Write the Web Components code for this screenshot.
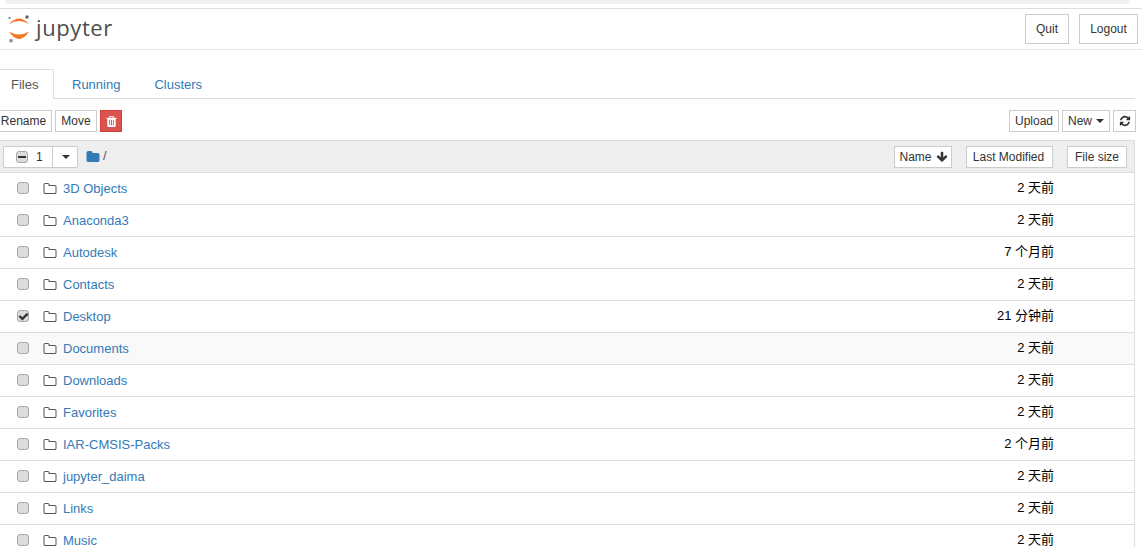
<!DOCTYPE html>
<html>
<head>
<meta charset="utf-8">
<title>Jupyter</title>
<style>
html, body { margin: 0; height: 547px; overflow: hidden; background: #fff; }
body { font: 13px/18px "Liberation Sans", "Noto Sans CJK SC", sans-serif; color: #000; }
</style>
</head>
<body>
<jp-header></jp-header>
<jp-tabs></jp-tabs>
<jp-toolbar></jp-toolbar>
<jp-list>
  <jp-row>3D Objects<span slot="time">2 天前</span></jp-row>
  <jp-row>Anaconda3<span slot="time">2 天前</span></jp-row>
  <jp-row>Autodesk<span slot="time">7 个月前</span></jp-row>
  <jp-row>Contacts<span slot="time">2 天前</span></jp-row>
  <jp-row checked>Desktop<span slot="time">21 分钟前</span></jp-row>
  <jp-row hover>Documents<span slot="time">2 天前</span></jp-row>
  <jp-row>Downloads<span slot="time">2 天前</span></jp-row>
  <jp-row>Favorites<span slot="time">2 天前</span></jp-row>
  <jp-row>IAR-CMSIS-Packs<span slot="time">2 个月前</span></jp-row>
  <jp-row>jupyter_daima<span slot="time">2 天前</span></jp-row>
  <jp-row>Links<span slot="time">2 天前</span></jp-row>
  <jp-row>Music<span slot="time">2 天前</span></jp-row>
</jp-list>

<script>
// iconos dibujados a mano, viewBox 1792
const ICONS = {
  folderO: "M1600 1312v-704q0-40-28-68t-68-28h-704q-40 0-68-28t-28-68v-64q0-40-28-68t-68-28h-320q-40 0-68 28t-28 68v960q0 40 28 68t68 28h1216q40 0 68-28t28-68zm128-704v704q0 92-66 158t-158 66h-1216q-92 0-158-66t-66-158v-960q0-92 66-158t158-66h320q92 0 158 66t66 158v32h672q92 0 158 66t66 158z",
  folder: "M1728 608v704q0 92-66 158t-158 66h-1216q-92 0-158-66t-66-158v-960q0-92 66-158t158-66h320q92 0 158 66t66 158v32h672q92 0 158 66t66 158z",
  refresh: "M1639 1056q0 5-1 7-64 268-268 434.500t-478 166.500q-146 0-282.500-55t-243.500-157l-129 129q-19 19-45 19t-45-19-19-45v-448q0-26 19-45t45-19h448q26 0 45 19t19 45-19 45l-137 137q71 66 161 102t187 36q134 0 250-65t186-179q11-17 53-117 8-23 30-23h192q13 0 22.500 9.500t9.500 22.500zm25-800v448q0 26-19 45t-45 19h-448q-26 0-45-19t-19-45 19-45l138-138q-148-137-349-137-134 0-250 65t-186 179q-11 17-53 117-8 23-30 23h-199q-13 0-22.500-9.500t-9.500-22.500v-7q65-268 270-434.500t480-166.500q146 0 284 55.500t245 156.500l130-129q19-19 45-19t45 19 19 45z",
  arrowDown: "M1675 832q0 53-37 90l-651 652q-39 37-91 37-53 0-90-37l-651-652q-38-36-38-90 0-53 38-91l74-75q39-37 91-37 53 0 90 37l294 294v-704q0-52 38-90t90-38h128q52 0 90 38t38 90v704l294-294q37-37 90-37 52 0 91 37l75 75q37 39 37 91z",
  trash: "M704 1376v-704q0-14-9-23t-23-9h-64q-14 0-23 9t-9 23v704q0 14 9 23t23 9h64q14 0 23-9t9-23zm256 0v-704q0-14-9-23t-23-9h-64q-14 0-23 9t-9 23v704q0 14 9 23t23 9h64q14 0 23-9t9-23zm256 0v-704q0-14-9-23t-23-9h-64q-14 0-23 9t-9 23v704q0 14 9 23t23 9h64q14 0 23-9t9-23zm-544-992h448l-48-117q-7-9-17-11h-317q-10 2-17 11zm928 32v64q0 14-9 23t-23 9h-96v948q0 83-47 143.500t-113 60.500h-832q-66 0-113-58.500t-47-141.500v-952h-96q-14 0-23-9t-9-23v-64q0-14 9-23t23-9h309l70-167q15-37 54-63t79-26h320q40 0 79 26t54 63l70 167h309q14 0 23 9t9 23z",
  check: "M1671 566q0 40-28 68l-724 724-136 136q-28 28-68 28t-68-28l-136-136-362-362q-28-28-28-68t28-68l136-136q28-28 68-28t68 28l294 295 656-657q28-28 68-28t68 28l136 136q28 28 28 68z"
};

class JpIcon extends HTMLElement {
  connectedCallback() {
    const size = this.getAttribute("size") || 14;
    const shadow = this.attachShadow({ mode: "open" });
    shadow.innerHTML = `
      <style>
      :host { display: inline-flex; flex: none; }
      svg { display: block; fill: currentColor; }
      </style>
      <svg width="${size}" height="${size}" viewBox="0 0 1792 1792"><path d="${ICONS[this.getAttribute("name")]}"/></svg>`;
  }
}
customElements.define("jp-icon", JpIcon);

class JpBtn extends HTMLElement {
  constructor() {
    super();
    this.attachShadow({ mode: "open" }).innerHTML = `
      <style>
      :host {
        display: inline-flex; align-items: center; justify-content: center; gap: 4px;
        box-sizing: border-box; height: 22px; padding: 0 5px;
        border: 1px solid #ccc; background: #fff; color: #333;
        font-size: 12px; line-height: 18px; white-space: nowrap;
      }
      :host([big]) { height: 30px; }
      :host([danger]) { background: #d9534f; border-color: #d43f3a; color: #fff; }
      </style>
      <slot></slot>`;
  }
}
customElements.define("jp-btn", JpBtn);

class JpCheck extends HTMLElement {
  constructor() {
    super();
    this.attachShadow({ mode: "open" }).innerHTML = `
      <style>
      :host {
        display: flex; align-items: center; justify-content: center; flex: none;
        box-sizing: border-box; width: 12px; height: 12px;
        border: 1px solid #a8a8a8; border-radius: 3px; background: #dcdcdc; color: #333;
      }
      i { display: none; width: 8px; height: 2px; background: #333; }
      jp-icon { display: none; }
      :host([checked]) jp-icon { display: inline-flex; }
      :host([mixed]) i { display: block; }
      </style>
      <i></i><jp-icon name="check" size="11"></jp-icon>`;
  }
}
customElements.define("jp-check", JpCheck);

class JpHeader extends HTMLElement {
  constructor() {
    super();
    this.attachShadow({ mode: "open" }).innerHTML = `
      <style>
      :host { display: block; }
      .strip { height: 4px; margin: 0 12px 0 5px; background: #f1f1f1; border-radius: 0 0 8px 8px; }
      .bar {
        display: flex; align-items: center; box-sizing: border-box; height: 42px;
        margin-top: 4px; padding: 0 4px 0 8px;
        border-top: 1px solid #ddd; border-bottom: 1px solid #e7e7e7;
      }
      .logo { display: flex; align-items: center; gap: 5px; flex: 1; }
      .word { font: 22px/30px "Open Sans", sans-serif; color: #4e4e4e; letter-spacing: .6px; margin-top: -4px; }
      .quit { margin-right: 10px; }
      </style>
      <div class="strip"></div>
      <div class="bar">
        <div class="logo">
          <svg width="23" height="30" viewBox="0 0 23 30">
            <path d="M1 10Q11 -1 21 10Q11 4 1 10Z" fill="#f37726"/>
            <path d="M1 17.500Q11 32.500 21 17.500Q11 23.500 1 17.500Z" fill="#f37726"/>
            <circle cx="19" cy="3" r="1.700" fill="#616161"/>
            <circle cx="1.500" cy="4" r="1.100" fill="#767677"/>
            <circle cx="3" cy="26.700" r="1.900" fill="#989798"/>
          </svg>
          <span class="word">jupyter</span>
        </div>
        <jp-btn big class="quit" style="width:44px">Quit</jp-btn>
        <jp-btn big style="width:59px">Logout</jp-btn>
      </div>`;
  }
}
customElements.define("jp-header", JpHeader);

class JpTabs extends HTMLElement {
  constructor() {
    super();
    this.attachShadow({ mode: "open" }).innerHTML = `
      <style>
      :host {
        display: flex; box-sizing: border-box; height: 30px; margin: 19px 7px 0 0;
        border-bottom: 1px solid #ddd; color: #337ab7;
      }
      a { box-sizing: border-box; height: 30px; padding: 7px 17px 0; line-height: 18px; }
      a.on {
        width: 54px; margin-right: 1px; padding: 6px 0 0 11px; color: #555; background: #fff;
        border: 1px solid #ddd; border-left: 0; border-bottom-color: #fff; border-radius: 0 2px 0 0;
      }
      </style>
      <a class="on">Files</a><a>Running</a><a>Clusters</a>`;
  }
}
customElements.define("jp-tabs", JpTabs);

class JpToolbar extends HTMLElement {
  constructor() {
    super();
    this.attachShadow({ mode: "open" }).innerHTML = `
      <style>
      :host { display: flex; gap: 3px; height: 22px; margin: 11px 6px 8px -5px; }
      .space { flex: 1; }
      .trash { width: 22px; padding: 0; }
      </style>
      <jp-btn style="width:57px">Rename</jp-btn>
      <jp-btn style="width:42px">Move</jp-btn>
      <jp-btn danger class="trash"><jp-icon name="trash" size="13"></jp-icon></jp-btn>
      <span class="space"></span>
      <jp-btn style="width:50px">Upload</jp-btn>
      <jp-btn style="width:48px">New <span style="width:0;height:0;border:4px solid transparent;border-top-color:#333;border-bottom:0"></span></jp-btn>
      <jp-btn style="width:23px;padding:0"><jp-icon name="refresh" size="12"></jp-icon></jp-btn>`;
  }
}
customElements.define("jp-toolbar", JpToolbar);

class JpList extends HTMLElement {
  constructor() {
    super();
    this.attachShadow({ mode: "open" }).innerHTML = `
      <style>
      :host { display: block; margin-right: 7px; border-right: 1px solid #ddd; }
      .head {
        display: flex; align-items: center; box-sizing: border-box; height: 33px;
        padding: 0 7px 0 3px; background: #eee;
        border: solid #ddd; border-width: 1px 0;
      }
      .group { display: flex; width: 75px; height: 22px; box-sizing: border-box; border: 1px solid #ccc; border-radius: 2px; background: #fff; color: #333; font-size: 12px; }
      .group .a { display: flex; align-items: center; gap: 8px; width: 49px; box-sizing: border-box; padding-left: 12px; border-right: 1px solid #ccc; }
      .group .b { flex: 1; display: flex; align-items: center; justify-content: center; padding-left: 1px; }
      .caret { width: 0; height: 0; border: 4px solid transparent; border-top-color: #333; border-bottom: 0; }
      .path { display: flex; align-items: center; gap: 3px; margin-left: 8px; flex: 1; color: #337ab7; font-size: 13px; }
      .path span { color: #555; margin-top: -2px; }
      .mid { margin: 0 14px; }
      </style>
      <div class="head">
        <div class="group">
          <div class="a"><jp-check mixed></jp-check>1</div>
          <div class="b"><i class="caret"></i></div>
        </div>
        <div class="path"><jp-icon name="folder" size="14"></jp-icon><span>/</span></div>
        <jp-btn style="width:58px;padding-left:6px">Name <jp-icon name="arrowDown" size="12"></jp-icon></jp-btn>
        <jp-btn class="mid" style="width:87px;padding-right:7px">Last Modified</jp-btn>
        <jp-btn style="width:60px">File size</jp-btn>
      </div>
      <slot></slot>`;
  }
}
customElements.define("jp-list", JpList);

class JpRow extends HTMLElement {
  constructor() {
    super();
    const checked = this.hasAttribute("checked") ? "checked" : "";
    this.attachShadow({ mode: "open" }).innerHTML = `
      <style>
      :host {
        display: flex; align-items: center; box-sizing: border-box; height: 32px;
        padding: 0 80px 0 17px; border-bottom: 1px solid #ddd; color: #337ab7;
      }
      :host([hover]) { background: #f9f9f9; }
      jp-check { margin-bottom: 1px; }
      jp-icon { margin: 0 6px 0 14px; color: #555; }
      .time { margin-left: auto; margin-bottom: 2px; color: #000; }
      </style>
      <jp-check ${checked}></jp-check>
      <jp-icon name="folderO" size="14"></jp-icon>
      <slot></slot>
      <div class="time"><slot name="time"></slot></div>`;
  }
}
customElements.define("jp-row", JpRow);
</script>
</body>
</html>
